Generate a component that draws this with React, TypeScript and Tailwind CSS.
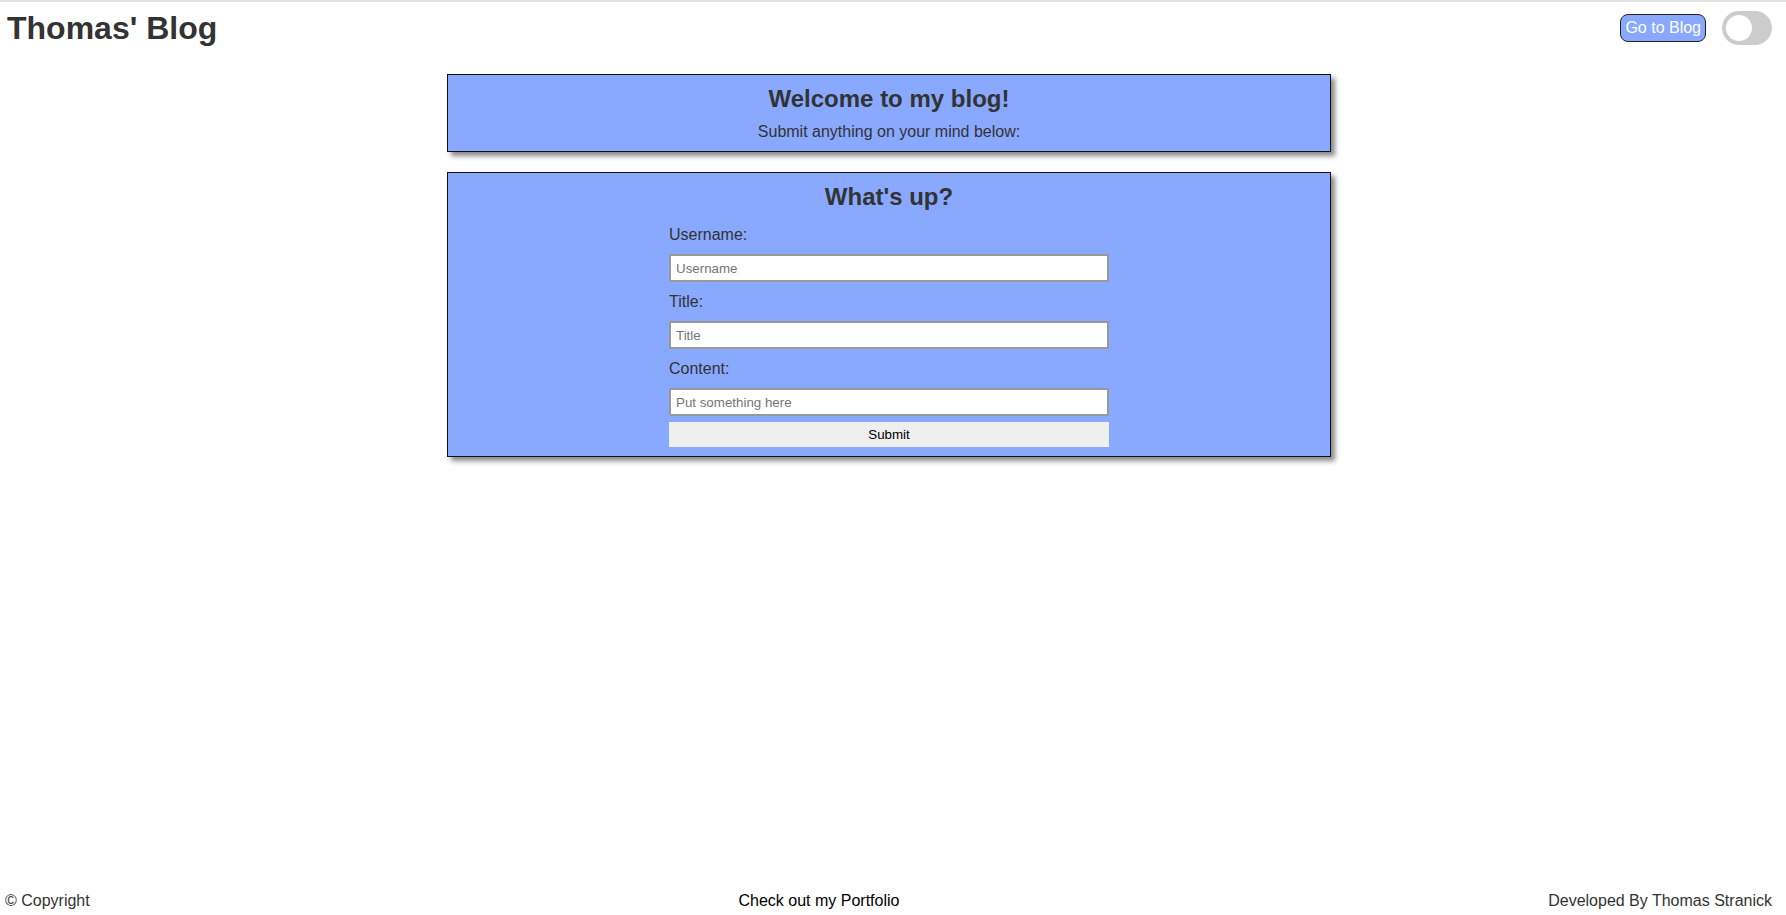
import { useState } from "react";

function Field({ label, placeholder, first }: { label: string; placeholder: string; first?: boolean }) {
  return (
    <>
      <label className={`block text-[16px] leading-[18px] ${first ? "" : "mt-[11px]"}`}>{label}</label>
      <input
        type="text"
        placeholder={placeholder}
        className="mt-[10px] h-[28px] w-full border-2 border-[#999] bg-white px-[5px] text-[13.33px] text-black placeholder:text-[#757575] outline-none"
      />
    </>
  );
}

export default function App() {
  const [dark, setDark] = useState(false);

  return (
    <div
      className="flex min-h-screen flex-col border-t-2 border-[#e3e3e3] bg-white text-[#333]"
      style={{ fontFamily: '"Liberation Sans", Arial, sans-serif' }}
    >
      {/* header */}
      <nav className="flex h-[52px] items-center justify-between pl-[7px] pr-[14px]">
        <h1 className="text-[32px] font-bold leading-[37px]">Thomas' Blog</h1>
        <div className="flex items-center gap-[16px]">
          <button className="h-[28px] rounded-[8px] border border-[#222] bg-[#89a8ff] px-[4px] text-[16px] text-white">
            Go to Blog
          </button>
          <button
            onClick={() => setDark(!dark)}
            className={`relative h-[34px] w-[50px] rounded-full ${dark ? "bg-[#2196f3]" : "bg-[#ccc]"}`}
          >
            <span
              className={`absolute top-[4px] h-[26px] w-[26px] rounded-full bg-white ${dark ? "left-[20px]" : "left-[4px]"}`}
            />
          </button>
        </div>
      </nav>

      <main className="flex flex-col items-center pr-[8px] pt-[20px]">
        <section className="w-[884px] border border-[#111] bg-[#89a8ff] px-[10px] py-[10px] text-center shadow-[4px_4px_5px_#888]">
          <h2 className="text-[24px] font-bold leading-[27.6px]">Welcome to my blog!</h2>
          <p className="mt-[10px] text-[16px] leading-[18px]">Submit anything on your mind below:</p>
        </section>

        <section className="mt-[20px] w-[884px] border border-[#111] bg-[#89a8ff] pb-[9px] pt-[10px] shadow-[4px_4px_5px_#888]">
          <h2 className="text-center text-[24px] font-bold leading-[27.6px]">What's up?</h2>
          <form className="mx-auto mt-[16px] w-[440px]" onSubmit={(e) => e.preventDefault()}>
            <Field label="Username:" placeholder="Username" first />
            <Field label="Title:" placeholder="Title" />
            <Field label="Content:" placeholder="Put something here" />
            <button type="submit" className="mt-[6px] block h-[25px] w-full bg-[#efefef] text-[13.33px] text-black">
              Submit
            </button>
          </form>
        </section>
      </main>

      <footer className="mt-auto flex items-center justify-between pb-[5px] pl-[5px] pr-[14px] text-[16px] leading-[18px]">
        <span>© Copyright</span>
        <a href="#" className="text-black">Check out my Portfolio</a>
        <span>Developed By Thomas Stranick</span>
      </footer>
    </div>
  );
}
